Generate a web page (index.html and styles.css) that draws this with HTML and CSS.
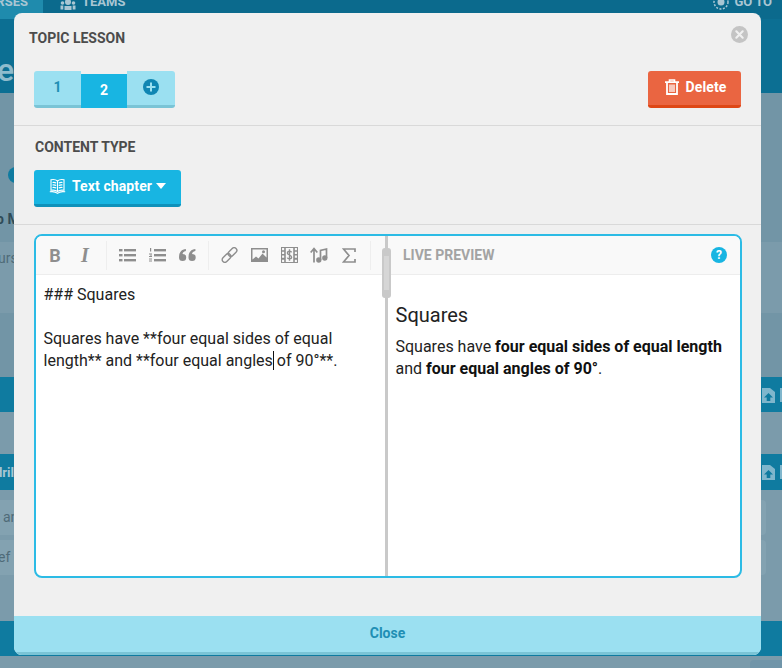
FILE: index.html
```html
<!DOCTYPE html>
<html lang="en">
<head>
<meta charset="utf-8">
<title>Topic lesson</title>
<link rel="stylesheet" href="styles.css">
</head>
<body>
<div class="backdrop">
  <div class="nav">
    <div class="nav-tab"><span class="nav-tab-text">RSES</span></div>
    <div class="nav-item">
      <svg class="nav-icon" viewBox="0 0 16 16" fill="#a9c6d3"><circle cx="8" cy="2" r="3"/><circle cx="2.500" cy="3" r="1.800"/><circle cx="13.500" cy="3" r="1.800"/><path d="M4.500 6h7v4h-7zM.5 5.500h2.800v4H.5zM12.700 5.500h2.800v4h-2.800z"/></svg>
      <span class="nav-label">TEAMS</span>
    </div>
    <div class="nav-right">
      <svg class="nav-icon" viewBox="0 0 16 16"><circle cx="8" cy="2" r="3.500" fill="#a9c6d3"/><circle cx="8" cy="2" r="7" fill="none" stroke="#a9c6d3" stroke-width="1.500" stroke-dasharray="2 1.500"/></svg>
      <span class="nav-label">GO TO</span>
    </div>
  </div>
  <div class="hero"><span class="hero-text">e</span></div>
  <div class="sec-a">
    <span class="dot"></span>
    <span class="sec-label">o M</span>
    <div class="row-a"><span class="row-text">urs</span></div>
  </div>
  <div class="band band-short"><svg class="file-ic" viewBox="0 0 13 16"><path d="M0 1h8l5 4v11H0z" fill="#7fb6cc"/><path d="M6.500 6l4.500 4.500H8.300V14H4.700v-3.500H2z" fill="#0f7ba0"/></svg><span class="band-box"></span></div>
  <div class="gap"></div>
  <div class="band"><span class="band-text">drill</span><svg class="file-ic" viewBox="0 0 13 16"><path d="M0 1h8l5 4v11H0z" fill="#7fb6cc"/><path d="M6.500 6l4.500 4.500H8.300V14H4.700v-3.500H2z" fill="#0f7ba0"/></svg><span class="band-box"></span></div>
  <div class="row-b"><span class="row-text row-text-an">an</span></div>
  <div class="row-b"><span class="row-text row-text-ef">ef d</span></div>
  <div class="band-end"></div>
  <div class="foot-chip"></div>
</div>

<div class="modal">
  <div class="modal-head">
    <h2 class="modal-title">TOPIC LESSON</h2>
    <button class="close" aria-label="Close">
      <svg viewBox="0 0 16 16" width="17" height="17"><circle cx="8" cy="8" r="8" fill="#c4c4c4"/><path d="M5 5l6 6M11 5l-6 6" stroke="#f0f0f0" stroke-width="2" stroke-linecap="round"/></svg>
    </button>
  </div>
  <div class="lesson-row">
    <div class="tabs">
      <div class="tab">1</div>
      <div class="tab active">2</div>
      <div class="tab tab-add">
        <svg viewBox="0 0 16 16" width="16" height="16"><circle cx="8" cy="8" r="8" fill="#0f86b3"/><path d="M8 3.500v9M3.500 8h9" stroke="#9be0f1" stroke-width="2"/></svg>
      </div>
    </div>
    <button class="btn btn-red">
      <svg viewBox="0 0 14 16" width="14" height="16" fill="none" stroke="#fff"><path d="M0 3.200h14" stroke-width="1.800"/><path d="M4.500 3V1h5v2" stroke-width="1.600"/><path d="M2 3.500V15h10V3.500" stroke-width="1.800"/><path d="M5 5.500V13M7 5.500V13M9 5.500V13" stroke-width="1.300"/></svg>
      Delete
    </button>
  </div>
  <div class="section">
    <h3 class="section-title">CONTENT TYPE</h3>
    <button class="btn btn-blue">
      <svg viewBox="0 0 16 15" width="17" height="15" fill="none" stroke="#fff" stroke-width="1.100"><path d="M8 2C6.500.7 3.500.4 1.500.8V11.300C3.500 11 6.500 11.200 8 12.500 9.500 11.200 12.500 11 14.500 11.300V.8C12.500.4 9.500.7 8 2ZM8 2V12.500M3 3.500C4.500 3.300 5.700 3.500 6.700 4M3 6C4.500 5.800 5.700 6 6.700 6.500M3 8.500C4.500 8.300 5.700 8.500 6.700 9M13 3.500C11.500 3.300 10.300 3.500 9.300 4M13 6C11.500 5.800 10.300 6 9.300 6.500M13 8.500C11.500 8.300 10.300 8.500 9.300 9M.3 12.800C3.500 12.300 6 12.600 8 14.300 10 12.600 12.500 12.300 15.700 12.800"/></svg>
      Text chapter
      <span class="caret"></span>
    </button>
  </div>
  <div class="editor-wrap">
    <div class="editor">
      <div class="pane pane-edit">
        <div class="toolbar">
          <div class="tool-group">
            <span class="tool t-b">B</span>
            <span class="tool t-i">I</span>
          </div>
          <div class="tool-group">
            <span class="tool"><svg class="ic" viewBox="0 0 17 14"><g fill="#8e8e8e"><rect x="0" y="1" width="3.500" height="2.400"/><rect x="0" y="6" width="3.500" height="2.400"/><rect x="0" y="11" width="3.500" height="2.400"/><rect x="5" y="1" width="12" height="2.400"/><rect x="5" y="6" width="12" height="2.400"/><rect x="5" y="11" width="12" height="2.400"/></g></svg></span>
            <span class="tool"><svg class="ic" viewBox="0 0 17 14"><g fill="#8e8e8e"><rect x="1" y="0" width="1.200" height="3.500"/><rect x="0" y="5.500" width="3" height="1"/><rect x="1.500" y="6.500" width="1" height="1.500"/><rect x="0" y="8" width="3" height="1"/><rect x="0" y="10.500" width="3" height="1"/><rect x="0" y="12.500" width="3" height="1"/><rect x="5" y="1" width="12" height="2.400"/><rect x="5" y="6" width="12" height="2.400"/><rect x="5" y="11" width="12" height="2.400"/></g></svg></span>
            <span class="tool"><svg class="ic" viewBox="0 0 17 14"><path fill="#8e8e8e" d="M0 9.500a3.600 3.600 0 1 0 3.600-3.600c0-1.500.9-2.500 3.300-3V1C2 1.600 0 4.500 0 9.500ZM9.500 9.500a3.600 3.600 0 1 0 3.600-3.600c0-1.500.9-2.500 3.300-3V1C11.500 1.600 9.500 4.500 9.500 9.500Z"/></svg></span>
          </div>
          <div class="tool-group">
            <span class="tool"><svg class="ic" viewBox="0 0 16 16" fill="none" stroke="#8e8e8e" stroke-width="1.400"><rect x="8.300" y="0" width="5.400" height="10" rx="2.700" transform="rotate(45 11 5)"/><rect x="2.300" y="6" width="5.400" height="10" rx="2.700" transform="rotate(45 5 11)"/></svg></span>
            <span class="tool"><svg class="ic" viewBox="0 0 17 14"><path fill="#8e8e8e" d="M0 0h17v14H0z"/><path fill="#f9f9f9" d="M1.500 1.500h14v8l-4-4-4 5-2.500-2-3.500 3z"/><circle cx="12.500" cy="3.800" r="1.500" fill="#8e8e8e"/></svg></span>
            <span class="tool"><svg class="ic" viewBox="0 0 16 15"><path fill="#8e8e8e" d="M0 0h16v15H0z"/><path fill="#f9f9f9" d="M1 1h2v2H1zM1 4.500h2v2H1zM1 8h2v2H1zM1 12h2v2H1zM13 1h2v2h-2zM13 4.500h2v2h-2zM13 8h2v2h-2zM13 12h2v2h-2zM4.500 1h7v13h-7z"/><path fill="none" stroke="#8e8e8e" stroke-width="1.300" d="M10 5C9.500 3.500 6 3.500 6 5.500s4 2 4 4-3.500 2-4 .5M8 2v11"/></svg></span>
            <span class="tool"><svg class="ic ic-audio" viewBox="0 0 18 16" fill="none" stroke="#8e8e8e" stroke-width="1.700"><path d="M4 15.500V2M.7 5.500 4 1.500 7.300 5.500"/><path d="M10.500 13V3.500l6-1.500V11"/><circle cx="8.800" cy="13" r="1.800" fill="#8e8e8e"/><circle cx="14.800" cy="11" r="1.800" fill="#8e8e8e"/></svg></span>
            <span class="tool"><svg class="ic ic-sum" viewBox="0 0 14 15" fill="none" stroke="#8e8e8e" stroke-width="1.700"><path d="M13 4V1H1.500L7 7.500 1.500 14H13v-3"/></svg></span>
          </div>
        </div>
        <div class="source">
          <p class="line">### Squares</p>
          <p class="line">&nbsp;</p>
          <p class="line">Squares have **four equal sides of equal</p>
          <p class="line">length** and **four equal angles<span class="cursor"></span> of 90°**.</p>
        </div>
      </div>
      <div class="splitter"><div class="grip"><div class="grip-inner"></div></div></div>
      <div class="pane pane-preview">
        <div class="preview-bar">
          <span class="preview-label">LIVE PREVIEW</span>
          <svg viewBox="0 0 16 16" width="16" height="16"><circle cx="8" cy="8" r="8" fill="#18b5e2"/><text class="help-mark" x="8" y="12.200" text-anchor="middle">?</text></svg>
        </div>
        <div class="preview-body">
          <h3 class="preview-h">Squares</h3>
          <p class="preview-p">Squares have <strong>four equal sides of equal length</strong> and <strong>four equal angles of 90°</strong>.</p>
        </div>
      </div>
    </div>
  </div>
  <div class="close-bar">Close</div>
</div>
</body>
</html>
```
FILE: styles.css
```css
* { box-sizing: border-box; }
html, body { margin: 0; padding: 0; height: 668px; overflow: hidden; }
body { font-family: Roboto, "Liberation Sans", sans-serif; background: #7b9bab; position: relative; }

/* dimmed page behind the dialog */
.backdrop { height: 668px; display: flex; flex-direction: column; color: #a9c6d3; font-weight: 700; overflow: hidden; }
.nav { height: 19px; flex: none; background: #0b6a8d; display: flex; font-size: 13px; line-height: 12px; }
.nav-tab { width: 43px; flex: none; background: #1f8bad; text-align: right; padding-right: 15px; white-space: nowrap; direction: rtl; }
.nav-tab-text { display: block; margin-top: -4px; }
.nav-item { margin-left: 17px; display: flex; gap: 6px; align-items: flex-start; height: 16px; }
.nav-right { margin-left: auto; display: flex; gap: 5px; align-items: flex-start; height: 16px; padding-right: 10px; white-space: nowrap; }
.nav-label { display: block; margin-top: -4px; }
.nav-icon { width: 16px; height: 16px; flex: none; }
.hero { height: 74px; flex: none; background: #0c6f93; overflow: hidden; }
.hero-text { font-size: 32px; font-weight: 500; line-height: 102px; margin-left: -3px; display: block; color: #8fbccd; }
.sec-a { height: 284px; flex: none; position: relative; background: #7295a6; }
.dot { position: absolute; left: 8px; top: 74px; width: 16px; height: 16px; border-radius: 50%; background: #0f7ba0; }
.sec-label { position: absolute; left: -4px; top: 118px; font-size: 14px; color: #2f4b58; }
.row-a { position: absolute; left: 0; right: 0; top: 149px; height: 71px; background: #7b9bab; }
.row-text { font-weight: 400; font-size: 14px; color: #4f6b78; white-space: nowrap; display: block; }
.row-a .row-text { margin-left: -2px; line-height: 33px; }
.band { height: 36px; flex: none; background: #0f7ba0; display: flex; justify-content: flex-end; align-items: center; gap: 5px; margin-right: -8px; position: relative; }
.band-short { height: 35px; }
.band-text { position: absolute; left: -5px; font-size: 13px; color: #a9c6d3; }
.band-box { width: 10px; height: 14px; background: #7fb6cc; flex: none; }
.file-ic { width: 13px; height: 16px; flex: none; }
.gap { height: 42px; flex: none; }
.row-b { height: 35px; flex: none; margin-top: 10px; margin-right: 16px; margin-left: -8px; padding-left: 8px; background: #83a2b1; border-radius: 0 4px 4px 0; }
.row-b + .row-b { margin-top: 5px; }
.row-text-an { margin-left: 3px; line-height: 35px; }
.row-text-ef { margin-left: -2px; line-height: 35px; }
.band-end { height: 35px; flex: none; margin-top: 46px; background: #0f7ba0; }
.foot-chip { width: 32px; height: 12px; flex: none; margin: 4px 0 0 auto; background: #7095a9; border-radius: 4px 0 0 0; }

/* dialog */
.modal { position: absolute; left: 14px; top: 13px; width: 747px; height: 642px; background: #f0f0f0; border-radius: 8px; display: flex; flex-direction: column; overflow: hidden; }
.modal-head { height: 58px; flex: none; padding: 17px 15px 0; position: relative; }
.modal-title { margin: 0; font-size: 14px; line-height: 16px; font-weight: 700; color: #4c4c4c; }
.close { position: absolute; right: 13px; top: 13px; padding: 0; border: 0; background: none; line-height: 0; }
.lesson-row { height: 55px; flex: none; padding: 0 20px; display: flex; justify-content: space-between; align-items: flex-start; border-bottom: 1px solid #d9d9d9; }
.tabs { display: flex; height: 37px; }
.tab { width: 47px; height: 37px; background: #9be0f1; border-bottom: 3px solid #7ac4d6; font-size: 14px; font-weight: 700; color: #1f8fb4; text-align: center; line-height: 33px; }
.tab:first-child { border-radius: 3px 0 0 3px; }
.tab.active { width: 46px; margin-top: 3px; height: 34px; background: #18b5e2; color: #fff; border-bottom: 0; line-height: 33px; }
.tab-add { width: 48px; border-radius: 0 3px 3px 0; display: flex; align-items: center; justify-content: center; padding-bottom: 2px; }
.btn { display: inline-flex; align-items: center; gap: 6px; border: 0; font-family: inherit; font-size: 14px; font-weight: 700; letter-spacing: .1px; color: #fff; border-radius: 3px; padding: 0 0 2px; }
.btn-red { width: 93px; height: 37px; background: #ea6541; border-bottom: 3px solid #de4716; justify-content: center; gap: 7px; padding-left: 2px; }
.section { height: 99px; flex: none; padding: 13px 20px 0; border-bottom: 1px solid #d9d9d9; }
.section-title { margin: 0 0 15px 1px; font-size: 14px; line-height: 16px; font-weight: 700; color: #4c4c4c; }
.btn-blue { width: 147px; height: 37px; background: #18b5e2; border-bottom: 3px solid #0f91ba; justify-content: center; }
.caret { width: 0; height: 0; border-left: 5.500px solid transparent; border-right: 5.500px solid transparent; border-top: 6px solid #fff; margin-left: -2px; }

.editor-wrap { flex: 1; padding: 9px 20px 0; min-height: 0; }
.editor { width: 708px; height: 344px; background: #fff; border: 2px solid #2cbbe5; border-radius: 8px; display: flex; overflow: hidden; }
.pane { display: flex; flex-direction: column; min-width: 0; }
.pane-edit { width: 349px; flex: none; }
.pane-preview { flex: 1; }
.toolbar { height: 39px; flex: none; background: #f9f9f9; border-bottom: 1px solid #ededed; display: flex; align-items: center; padding-left: 4px; }
.tool-group { display: flex; align-items: center; height: 29px; padding-right: 6px; margin-right: 5px; border-right: 1px solid #eeeeee; }
.tool { width: 30px; flex: none; display: flex; justify-content: center; align-items: center; }
.t-b { font-size: 18px; font-weight: 700; color: #8e8e8e; }
.t-i { font-family: "Liberation Serif", serif; font-style: italic; font-weight: 700; font-size: 20px; color: #8e8e8e; }
.ic { width: 17px; height: 16px; flex: none; }
.ic-audio { width: 18px; }
.ic-sum { width: 14px; height: 15px; }
.source { padding: 9px 7.500px 0; font-size: 16px; line-height: 22px; color: #222; }
.line { margin: 0; white-space: nowrap; }
.cursor { display: inline-block; width: 1px; height: 19px; margin-right: -1px; background: #111; vertical-align: -4px; }
.splitter { width: 3px; flex: none; background: #c9c9c9; position: relative; }
.grip { position: absolute; left: -3px; top: 12px; width: 9px; height: 50px; background: #c9c9c9; border-radius: 3px; padding: 8px 2px; }
.grip-inner { height: 100%; background: #d6d6d6; }
.preview-bar { height: 39px; flex: none; background: #f9f9f9; border-bottom: 1px solid #ededed; display: flex; align-items: center; justify-content: space-between; padding: 0 13px 0 15px; }
.preview-label { font-size: 14px; font-weight: 700; color: #a3a3a3; }
.help-mark { font-size: 12px; font-weight: 700; fill: #fff; }
.preview-body { padding: 27px 7.500px 0; }
.preview-h { margin: 0 0 8px; font-size: 20px; line-height: 26px; font-weight: 400; color: #222; }
.preview-p { margin: 0; font-size: 16px; line-height: 22px; color: #222; }
.preview-p strong { color: #111; }
.close-bar { height: 39px; flex: none; background: #9be0f1; border-bottom: 3px solid #7ac4d6; text-align: center; font-size: 14px; font-weight: 700; color: #1f8fb4; line-height: 35px; }
```
